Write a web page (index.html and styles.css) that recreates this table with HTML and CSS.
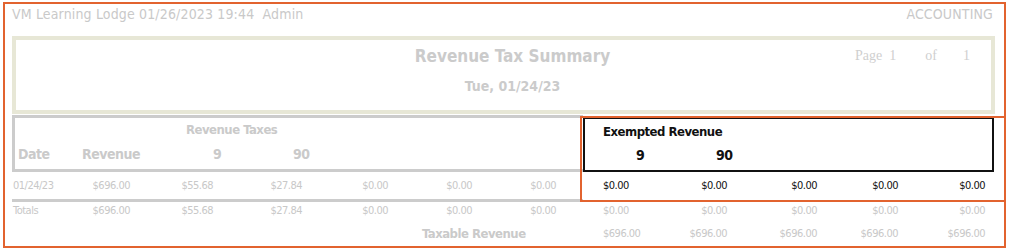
FILE: index.html
```html
<!DOCTYPE html>
<html>
<head>
<meta charset="utf-8">
<link rel="stylesheet" href="styles.css">
</head>
<body>
<div class="frame">
  <div class="topbar">
    <span class="site">VM Learning Lodge 01/26/2023 19:44&nbsp;&nbsp;Admin</span>
    <span class="dept">ACCOUNTING</span>
  </div>
  <div class="titlebox">
    <div class="title-main">
      <div class="title">Revenue Tax Summary</div>
      <div class="subtitle">Tue, 01/24/23</div>
    </div>
    <div class="pageinfo"><span class="pg">Page</span><span class="pg1">1</span><span class="of">of</span><span class="pgn">1</span></div>
  </div>
  <div class="report">
    <div class="head">
      <div class="head-gray">
        <div class="hrow1 group">Revenue Taxes</div>
        <div class="hrow2 cols-gray">
          <span>Date</span><span>Revenue</span><span>9</span><span>90</span>
        </div>
      </div>
      <div class="head-black">
        <div class="hrow1 group">Exempted Revenue</div>
        <div class="hrow2 cols-black">
          <span>9</span><span>90</span>
        </div>
      </div>
    </div>
    <div class="row data">
      <span class="c first g">01/24/23</span>
      <span class="c g">$696.00</span>
      <span class="c g">$55.68</span>
      <span class="c g">$27.84</span>
      <span class="c g">$0.00</span>
      <span class="c g">$0.00</span>
      <span class="c g last-g">$0.00</span>
      <span class="c b first-b">$0.00</span>
      <span class="c b">$0.00</span>
      <span class="c b">$0.00</span>
      <span class="c b">$0.00</span>
      <span class="c b">$0.00</span>
      <span class="c end"></span>
    </div>
    <div class="row totals">
      <span class="c first">Totals</span>
      <span class="c">$696.00</span>
      <span class="c">$55.68</span>
      <span class="c">$27.84</span>
      <span class="c">$0.00</span>
      <span class="c">$0.00</span>
      <span class="c last-g">$0.00</span>
      <span class="c first-b">$0.00</span>
      <span class="c">$0.00</span>
      <span class="c">$0.00</span>
      <span class="c">$0.00</span>
      <span class="c">$0.00</span>
      <span class="c end"></span>
    </div>
    <div class="row taxable">
      <span class="c tlabel">Taxable Revenue</span>
      <span class="c first-b">$696.00</span>
      <span class="c">$696.00</span>
      <span class="c">$696.00</span>
      <span class="c">$696.00</span>
      <span class="c">$696.00</span>
      <span class="c end"></span>
    </div>
    <div class="highlight"></div>
  </div>
</div>
</body>
</html>
```

FILE: styles.css
```css
* { box-sizing: border-box; }
html, body { margin: 0; padding: 0; background: #ffffff; }
body {
  font-family: "DejaVu Sans Condensed", "DejaVu Sans", sans-serif;
  font-stretch: condensed;
  color: #c8c8c8;
}
.frame {
  margin: 2px 0 0 3px;
  width: 1003px;
  height: 246px;
  border: 2px solid #e2632f;
}
.topbar {
  height: 32px;
  display: flex;
  justify-content: space-between;
  align-items: flex-start;
  padding: 0 11px 0 7px;
  font-size: 14px;
  letter-spacing: 0.15px;
  line-height: 20px;
  color: #c9c9c9;
}
.titlebox {
  margin-left: 7px;
  width: 983px;
  height: 78px;
  border: 4px solid #e7e7d6;
  display: grid;
  grid-template-columns: 198px 1fr 180px;
}
.title-main {
  grid-column: 2;
  text-align: center;
  font-weight: bold;
  color: #cbcbcb;
}
.title {
  font-size: 17px;
  line-height: 24px;
  margin-top: 4px;
}
.subtitle {
  font-size: 14px;
  line-height: 20px;
  margin-top: 8px;
}
.pageinfo {
  grid-column: 3;
  font-family: "Liberation Serif", serif;
  font-stretch: normal;
  font-size: 14px;
  line-height: 18px;
  color: #cfcfcf;
  padding: 7px 0 0 44px;
  white-space: nowrap;
}
.pg1 { margin-left: 7px; }
.of { margin-left: 29px; }
.pgn { margin-left: 26px; }

.report {
  position: relative;
  margin: 1px 0 0 7px;
  width: 982px;
}
.head {
  display: flex;
  height: 57px;
  font-weight: bold;
  font-size: 13px;
  letter-spacing: -0.5px;
}
.head-gray {
  width: 571px;
  height: 57px;
  border: 3px solid #cccccc;
  border-right: none;
  color: #cacaca;
}
.head-black {
  width: 411px;
  height: 55px;
  margin-top: 2px;
  border: 2px solid #111111;
  color: #111111;
}
.hrow1, .hrow2 {
  height: 24px;
  line-height: 24px;
  white-space: nowrap;
}
.hrow2 { font-size: 14px; }
.head-gray .hrow1 { padding-left: 171px; }
.head-black .hrow1 { padding-left: 18px; margin-top: 1px; }
.head-black .hrow2 { margin-top: -1px; }
.cols-gray {
  display: grid;
  grid-template-columns: 64px 131px 80px 1fr;
  padding-left: 3px;
}
.cols-black {
  display: grid;
  grid-template-columns: 80px 1fr;
  padding-left: 51px;
}

.row {
  display: grid;
  grid-template-columns: 58px 60px 83px 89px 86px 84px 111px 77px 67px 90px 81px 90px 6px;
  font-size: 11px;
  letter-spacing: -0.5px;
  color: #c8c8c8;
  white-space: nowrap;
}
.c { text-align: right; }
.c.first { text-align: left; padding-left: 1px; }
.c.last-g { padding-right: 27px; }
.c.first-b { text-align: left; padding-left: 20px; }
.row .c:nth-child(12) { padding-right: 3px; }
.data { height: 30px; line-height: 27px; }
.data .g { border-bottom: 3px solid #cccccc; }
.data .b { border-bottom: 2px solid #111111; color: #111111; }
.totals { height: 16px; line-height: 17px; }
.taxable { margin-top: 4px; height: 24px; line-height: 24px; }
.tlabel {
  grid-column: 1 / 8;
  text-align: left;
  padding-left: 410px;
  font-size: 13px;
  font-weight: bold;
  color: #cacaca;
}
.taxable .c:nth-child(6) { padding-right: 3px; }
.highlight {
  position: absolute;
  left: 568px;
  top: 1px;
  width: 426px;
  height: 86px;
  border: 2px solid #e2632f;
  pointer-events: none;
}
```
